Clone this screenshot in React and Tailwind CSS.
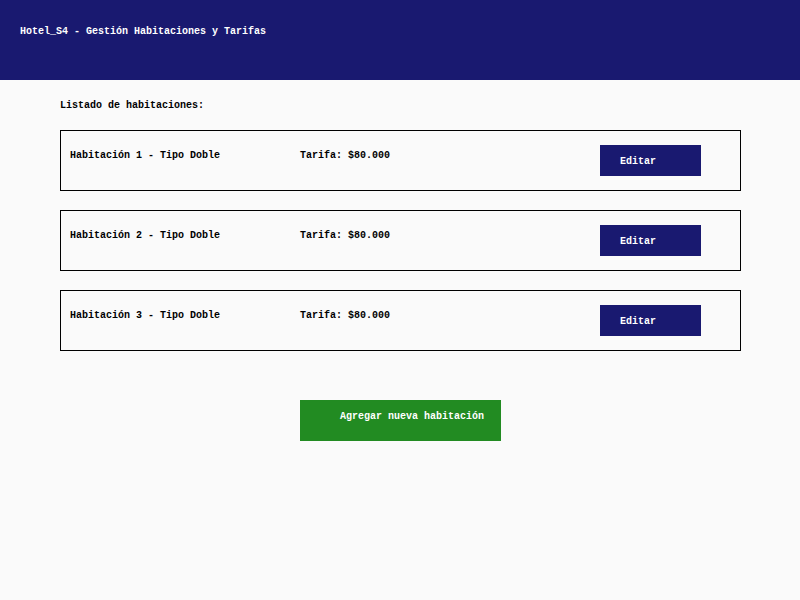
import React from "react";

const font = { fontFamily: '"Liberation Mono", "DejaVu Sans Mono", monospace' };

function Card({ n }) {
  return (
    <div className="flex h-[61px] w-[681px] items-start border border-black pl-[9px] pt-[14px]">
      <span className="mt-[5px] w-[230px] leading-[12px]">Habitación {n} - Tipo Doble</span>
      <span className="mt-[5px] w-[300px] leading-[12px]">Tarifa: $80.000</span>
      <div className="h-[31px] w-[101px] bg-[#191970] pl-[20px] pt-[11px] leading-[12px] text-white">Editar</div>
    </div>
  );
}

export default function App() {
  return (
    <div className="min-h-[600px] bg-[#fafafa] text-[10px] font-bold text-black" style={font}>
      <div className="h-[80px] bg-[#191970] pl-[20px] pt-[26px] leading-[12px] text-white">
        Hotel_S4 - Gestión Habitaciones y Tarifas
      </div>
      <div className="pl-[60px]">
        <div className="pt-[20px] leading-[12px]">Listado de habitaciones:</div>
        <div className="mt-[18px] flex flex-col gap-[19px]">
          <Card n={1} />
          <Card n={2} />
          <Card n={3} />
        </div>
        <div className="mt-[49px] ml-[240px] h-[41px] w-[201px] bg-[#228b22] pl-[40px] pt-[11px] leading-[12px] text-white">
          Agregar nueva habitación
        </div>
      </div>
    </div>
  );
}
